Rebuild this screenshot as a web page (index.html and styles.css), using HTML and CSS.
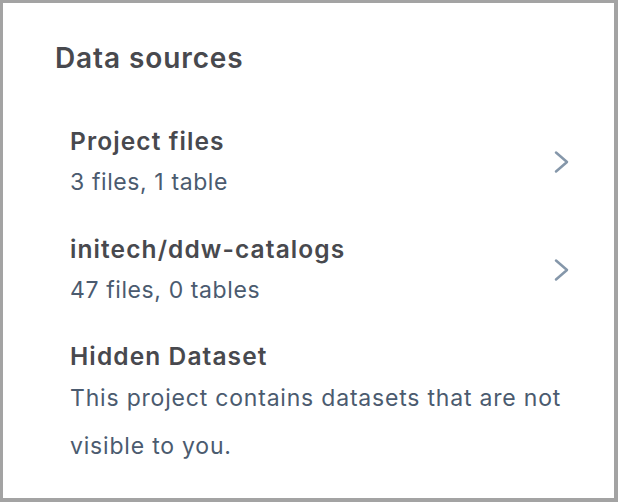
FILE: index.html
```html
<!DOCTYPE html>
<html>
<head>
<meta charset="utf-8">
<link rel="stylesheet" href="styles.css">
</head>
<body>
<div class="panel">
  <h2 class="heading">Data sources</h2>
  <ul class="list">
    <li class="item">
      <div class="item-text">
        <div class="item-title">Project files</div>
        <div class="item-sub">3 files, 1 table</div>
      </div>
      <svg class="chev" width="18" height="24" viewBox="0 0 18 24"><path d="M3 2.5 L14 12 L3 21.5" fill="none" stroke="#8597aa" stroke-width="2.5" stroke-linecap="round" stroke-linejoin="round"/></svg>
    </li>
    <li class="item">
      <div class="item-text">
        <div class="item-title">initech/ddw-catalogs</div>
        <div class="item-sub">47 files, 0 tables</div>
      </div>
      <svg class="chev" width="18" height="24" viewBox="0 0 18 24"><path d="M3 2.5 L14 12 L3 21.5" fill="none" stroke="#8597aa" stroke-width="2.5" stroke-linecap="round" stroke-linejoin="round"/></svg>
    </li>
    <li class="item hidden">
      <div class="item-text">
        <div class="item-title">Hidden Dataset</div>
        <div class="item-desc">This project contains datasets that are not visible to you.</div>
      </div>
    </li>
  </ul>
</div>
</body>
</html>
```
FILE: styles.css
```css
html, body {
  margin: 0;
  padding: 0;
  background: #ffffff;
}
body {
  font-family: Inter, "Noto Sans", sans-serif;
}
.panel {
  box-sizing: border-box;
  width: 618px;
  height: 502px;
  border-style: solid;
  border-color: #a3a3a3;
  border-width: 3px 4px 4px 3px;
  padding: 37px 43px 0 52px;
}
.heading {
  margin: 0;
  font-size: 28px;
  font-weight: 600;
  letter-spacing: 0.9px;
  color: #48494e;
  line-height: 36px;
}
.list {
  list-style: none;
  margin: 49px 0 0 0;
  padding: 0 0 0 15px;
  display: flex;
  flex-direction: column;
  gap: 35px;
}
.item {
  display: flex;
  align-items: center;
  justify-content: space-between;
}
.item-title {
  font-size: 24.5px;
  font-weight: 600;
  letter-spacing: 1.1px;
  color: #48494e;
  line-height: 32px;
}
.item-sub {
  font-size: 23px;
  letter-spacing: 0.6px;
  color: #4b5b6f;
  line-height: 32px;
  margin-top: 9px;
}
.chev { flex: none; display: block; }
.item.hidden .item-title { margin-top: -1px; }
.item-desc {
  font-size: 23px;
  letter-spacing: 0.8px;
  color: #4b5b6f;
  line-height: 48px;
  margin-top: 2px;
}
```
